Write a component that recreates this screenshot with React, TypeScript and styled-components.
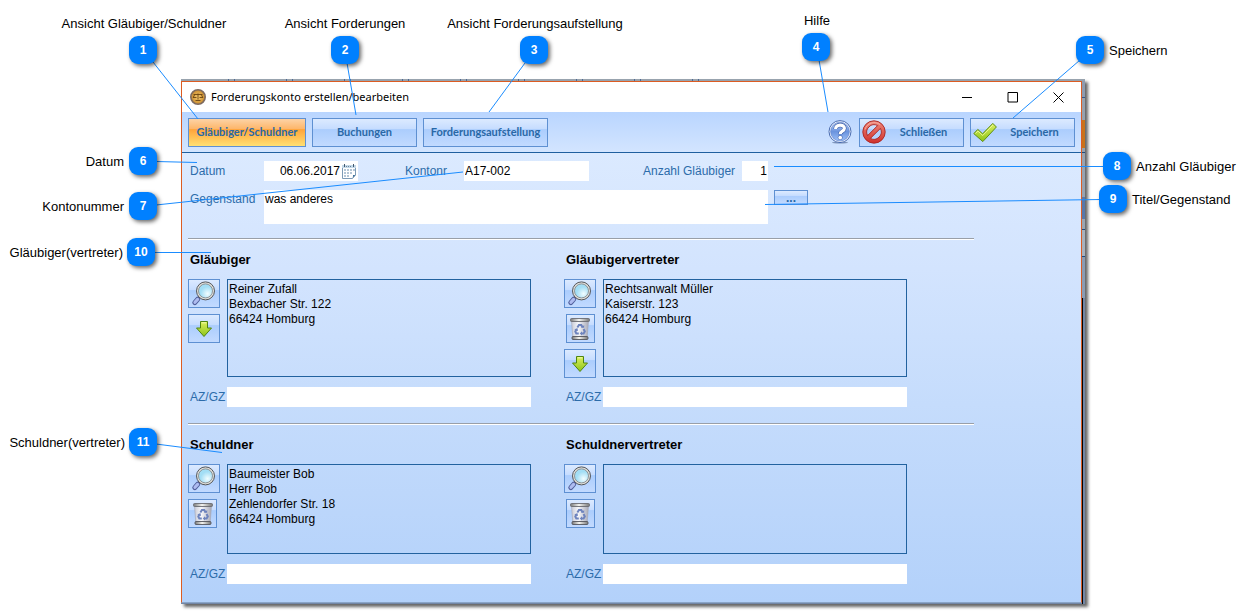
import React from "react";
import styled, { createGlobalStyle, css } from "styled-components";

const GlobalStyle = createGlobalStyle`
  *, *::before, *::after { box-sizing: border-box; }
  body { margin: 0; background: #fff; }
  button, input, textarea { font: inherit; color: inherit; margin: 0; }
`;

const sans = `"Liberation Sans", Arial, sans-serif`;

const Page = styled.div`
  position: relative;
  min-width: 1251px;
  padding: 79px 166px 8px 181px;
  font: 12px/16px ${sans};
  color: #000;
  overflow: hidden;
`;

/* Sliver of the application that shows behind the dialog */
const Backdrop = styled.div`
  padding: 2px 3px 1px 0;
  box-shadow: 3px 3px 3px rgba(0, 0, 0, 0.6);
  background:
    repeating-linear-gradient(90deg, transparent 0 47px, #4c6a95 47px 48px, transparent 48px 53px, #4c6a95 53px 54px, transparent 54px 58px) 0 0 / 560px 2px no-repeat,
    linear-gradient(#98a3ae, #98a3ae) 0 0 / 100% 2px no-repeat,
    linear-gradient(#000, #000) calc(100% - 2px) 219px / 1px 100% no-repeat,
    linear-gradient(
      #8d9bb0 0 18px, #35568a 18px 19px, #96a1ae 19px 41px, #c9731c 41px 69px,
      #96a1ae 69px 73px, #1f4c80 73px 74px, #97a2b0 74px 118px, #5878aa 118px 140px,
      #9aa5b2 140px 150px, #1f4c80 150px 151px, #a7b1bd 151px 177px, #1f4c80 177px 178px,
      #8a9bb3 178px 219px, #7286a6 219px
    );
`;

const Dialog = styled.main`
  border: 1px solid #dc5c22;
  border-bottom-color: #8aa5c8;
  background: linear-gradient(#e0edff, #d3e4fe 36%, #c5dcfc 62%, #b3d1fa);
`;

const TitleBar = styled.header`
  display: flex;
  align-items: center;
  height: 30px;
  padding-left: 8px;
  background: #fff;
  font: 11px/16px "Noto Sans", "Segoe UI", sans-serif;
`;

const Title = styled.h1`
  flex: 1;
  margin: 0 0 0 5px;
  font: inherit;
`;

const CaptionButton = styled.button`
  display: grid;
  place-items: center;
  width: 46px;
  height: 30px;
  padding: 0;
  border: 0;
  background: none;
`;

const Toolbar = styled.nav`
  display: flex;
  align-items: center;
  gap: 6px;
  height: 41px;
  padding: 0 6px;
  border-bottom: 1px solid #1f5f9f;
  background: linear-gradient(#b9d5ff, #d3e5ff);
`;

const Spacer = styled.span`
  flex: 1;
`;

const face = css`
  border: 1px solid #5e90d2;
  background: linear-gradient(#dceaff, #c5dcff 38%, #abcdfd 39%, #c2daff);
  color: #2968a6;
`;

const ToolButton = styled.button<{ $width: number; $active?: boolean }>`
  ${face}
  display: flex;
  align-items: center;
  width: ${(p) => p.$width}px;
  height: 29px;
  padding: 0 2px;
  font: bold 11px/16px Lato, Calibri, sans-serif;
  white-space: nowrap;
  ${(p) =>
    p.$active &&
    css`
      background: linear-gradient(#fdd3a6, #fdb568 38%, #ffa43a 39%, #ffe073);
    `}
`;

const ToolLabel = styled.span`
  flex: 1;
  text-align: center;
`;

const HelpButton = styled.button`
  width: 25px;
  height: 25px;
  padding: 0;
  border: 0;
  background: none;
  text-align: left;
`;

const Form = styled.form`
  width: 798px;
  padding: 8px 6px 18px;
`;

const FieldRow = styled.div`
  display: flex;
  align-items: center;
  height: 20px;
`;

const Label = styled.label<{ $width: number; $gap?: number }>`
  width: ${(p) => p.$width}px;
  margin-left: ${(p) => p.$gap ?? 0}px;
  padding-left: 2px;
  color: #2c6caa;
  white-space: nowrap;
`;

const TextInput = styled.input<{ $width?: number; $end?: boolean }>`
  ${(p) => (p.$width ? `width: ${p.$width}px;` : "flex: 1; min-width: 0;")}
  height: 20px;
  padding: 0 1px;
  border: 0;
  background: #fff;
  text-align: ${(p) => (p.$end ? "right" : "left")};
`;

const DateField = styled.span`
  display: flex;
  align-items: center;
  width: 94px;
  background: #fff;
`;

const PickerButton = styled.button`
  width: 16px;
  height: 16px;
  margin-right: 1px;
  padding: 0;
  border: 0;
  background: none;
`;

const SubjectRow = styled.div`
  display: flex;
  align-items: flex-start;
  margin-top: 9px;
  line-height: 18px;
`;

const Subject = styled.textarea`
  width: 504px;
  height: 34px;
  padding: 0 1px;
  border: 0;
  background: #fff;
  resize: none;
`;

const MoreButton = styled.button`
  ${face}
  width: 34px;
  height: 15px;
  margin-left: 6px;
  padding: 0;
  font-weight: bold;
  line-height: 12px;
`;

const Parties = styled.section`
  display: grid;
  grid-template-columns: 343px 343px;
  column-gap: 33px;
  margin-top: 14px;
  border-top: 1px solid #999fa8;
  box-shadow: inset 0 1px #fff;

  & + & {
    margin-top: 16px;
  }
`;

const Party = styled.div`
  padding-top: 13px;
`;

const PartyTitle = styled.h2`
  margin: 0 0 11px;
  padding-left: 2px;
  font: bold 13px/16px ${sans};
`;

const PartyBody = styled.div<{ $height: number }>`
  display: grid;
  grid-template: 100% / 32px 304px;
  column-gap: 7px;
  height: ${(p) => p.$height}px;
`;

const IconColumn = styled.div<{ $center?: boolean }>`
  display: flex;
  flex-direction: column;
  align-items: ${(p) => (p.$center ? "center" : "flex-start")};
  gap: 6px;
`;

const IconButton = styled.button<{ $width?: number }>`
  ${face}
  display: grid;
  place-items: center;
  flex: none;
  width: ${(p) => p.$width ?? 32}px;
  height: 29px;
  padding: 0;
`;

const Address = styled.textarea`
  height: 100%;
  padding: 2px 1px;
  border: 1px solid #22629f;
  background: none;
  line-height: 15px;
  resize: none;
`;

const ReferenceRow = styled.div`
  display: flex;
  align-items: center;
  height: 20px;
  margin-top: 10px;
`;

/* ---------- callouts ---------- */

const CalloutLayer = styled.div<{ $side: "left" | "right" }>`
  position: absolute;
  top: 0;
  ${(p) => p.$side}: 0;
  width: ${(p) => (p.$side === "left" ? 700 : 500)}px;
  height: 611px;
  pointer-events: none;
`;

const Leaders = styled.svg`
  position: absolute;
  inset: 0;
  width: 100%;
  height: 100%;
  stroke: #1a8cff;
`;

const Pin = styled.span<{ $x: number; $y: number }>`
  position: absolute;
  left: ${(p) => p.$x}px;
  top: ${(p) => p.$y}px;
  display: grid;
  place-items: center;
  width: 28px;
  height: 28px;
  border-radius: 9px;
  background: #0080ff;
  box-shadow: 2px 2px 4px rgba(0, 0, 0, 0.6);
  color: #fff;
  font: bold 12px/16px ${sans};
`;

const PinText = styled.span<{ $x: number; $y: number; $align: "center" | "start" | "end" }>`
  position: absolute;
  left: ${(p) => p.$x - (p.$align === "center" ? 100 : p.$align === "end" ? 200 : 0)}px;
  top: ${(p) => p.$y}px;
  width: 200px;
  text-align: ${(p) => p.$align};
  font: 13px/16px ${sans};
  white-space: nowrap;
`;

type Callout = {
  n: number;
  text: string;
  pin: [number, number];
  label: [number, number];
  align: "center" | "start" | "end";
  line: [number, number, number, number];
};

const leftCallouts: Callout[] = [
  { n: 1, text: "Ansicht Gläubiger/Schuldner", pin: [129, 36], label: [144, 16], align: "center", line: [153, 62, 198, 119] },
  { n: 2, text: "Ansicht Forderungen", pin: [331, 36], label: [345, 16], align: "center", line: [347, 63, 356, 115] },
  { n: 3, text: "Ansicht Forderungsaufstellung", pin: [520, 36], label: [535, 16], align: "center", line: [525, 63, 489, 112] },
  { n: 6, text: "Datum", pin: [129, 147], label: [124, 154], align: "end", line: [156, 161.5, 197, 162.5] },
  { n: 7, text: "Kontonummer", pin: [129, 192], label: [124, 199], align: "end", line: [156, 205, 463, 172] },
  { n: 10, text: "Gläubiger(vertreter)", pin: [127, 238], label: [123, 245], align: "end", line: [154, 252.5, 211, 252.5] },
  { n: 11, text: "Schuldner(vertreter)", pin: [129, 428], label: [125, 435], align: "end", line: [156, 444, 222, 452.5] },
];

const rightCallouts: Callout[] = [
  { n: 4, text: "Hilfe", pin: [51, 33], label: [66, 13], align: "center", line: [68, 60, 77, 112] },
  { n: 5, text: "Speichern", pin: [325, 36], label: [358, 43], align: "start", line: [329, 60, 262, 118] },
  { n: 8, text: "Anzahl Gläubiger", pin: [352, 152], label: [385, 159], align: "start", line: [23, 166.5, 354, 166.5] },
  { n: 9, text: "Titel/Gegenstand", pin: [348, 185], label: [381, 192], align: "start", line: [14, 204.5, 350, 199.5] },
];

function Callouts({ side, items }: { side: "left" | "right"; items: Callout[] }) {
  return (
    <CalloutLayer $side={side}>
      <Leaders aria-hidden="true">
        {items.map(({ n, line: [x1, y1, x2, y2] }) => (
          <line key={n} x1={x1} y1={y1} x2={x2} y2={y2} />
        ))}
      </Leaders>
      {items.map((c) => (
        <React.Fragment key={c.n}>
          <PinText $x={c.label[0]} $y={c.label[1]} $align={c.align}>{c.text}</PinText>
          <Pin $x={c.pin[0]} $y={c.pin[1]}>{c.n}</Pin>
        </React.Fragment>
      ))}
    </CalloutLayer>
  );
}

/* ---------- icons ---------- */

const GradientSheet = styled.svg`
  position: absolute;
  width: 0;
  height: 0;
`;

const Gradients = () => (
  <GradientSheet aria-hidden="true">
    <defs>
      <radialGradient id="gold"><stop offset="0" stopColor="#f5cb72" /><stop offset="1" stopColor="#c98a2b" /></radialGradient>
      <linearGradient id="blue" x2="0" y2="1"><stop stopColor="#b9cff5" /><stop offset=".5" stopColor="#6a93de" /><stop offset="1" stopColor="#9dc0f8" /></linearGradient>
      <linearGradient id="red" x2="0" y2="1"><stop stopColor="#f08a7c" /><stop offset="1" stopColor="#cf2f2b" /></linearGradient>
      <linearGradient id="green" x2="0" y2="1"><stop stopColor="#dcf060" /><stop offset="1" stopColor="#8cc418" /></linearGradient>
      <radialGradient id="lens" cx=".65" cy=".7"><stop stopColor="#f2fdff" /><stop offset="1" stopColor="#a3def5" /></radialGradient>
      <linearGradient id="can"><stop stopColor="#c9cbd6" /><stop offset=".4" stopColor="#f6f7fb" /><stop offset="1" stopColor="#a9abb8" /></linearGradient>
      <linearGradient id="rim"><stop stopColor="#777" /><stop offset=".45" stopColor="#f4f4f0" /><stop offset="1" stopColor="#777" /></linearGradient>
    </defs>
  </GradientSheet>
);

const ScalesIcon = () => (
  <svg width="16" height="16" viewBox="0 0 16 16" aria-hidden="true">
    <circle cx="8" cy="8" r="7.2" fill="url(#gold)" stroke="#7d6a60" strokeWidth="1.6" />
    <path d="M3.500 5.500h9M8 4.500v6M5.500 11.500h5M3 8.500h3.500M9.500 8.500H13M4.700 5.500L3.200 8.500M11.300 5.500l1.500 3" fill="none" stroke="#6b4410" strokeWidth=".9" />
  </svg>
);

const HelpIcon = () => (
  <svg width="24" height="24" viewBox="0 0 24 24" aria-hidden="true">
    <ellipse cx="12" cy="22.6" rx="8" ry="1" fill="#7d93b8" />
    <circle cx="12" cy="11.6" r="11" fill="#edf3ff" stroke="#4a6cb0" />
    <circle cx="12" cy="11.6" r="9.4" fill="url(#blue)" stroke="#5b7ec6" strokeWidth=".6" />
    <path d="M7.600 9C7.600 3.800 16.400 3.900 16.400 8.300c0 3-4.200 2.800-4.200 6" fill="none" stroke="#3b5da6" strokeWidth="4.400" />
    <circle cx="12.2" cy="17.600" r="2.400" fill="#3b5da6" />
    <path d="M7.600 9C7.600 3.800 16.400 3.900 16.400 8.300c0 3-4.200 2.800-4.200 5.700" fill="none" stroke="#fff" strokeWidth="3.200" />
    <circle cx="12.2" cy="17.600" r="1.900" fill="#fff" />
  </svg>
);

const ForbidIcon = () => (
  <svg width="24" height="24" viewBox="0 0 24 24" aria-hidden="true">
    <path fillRule="evenodd" d="M12 .8a11.2 11.2 0 1 1 0 22.4A11.2 11.2 0 0 1 12 .8zM5.6 15.6L15.6 5.6A7.4 7.4 0 0 0 5.6 15.6zM8.400 18.400A7.400 7.400 0 0 0 18.400 8.400z" fill="url(#red)" stroke="#a92623" strokeWidth=".9" />
    <path d="M3 9.500A9.500 9.500 0 0 1 18 4.600" fill="none" stroke="#f7b5aa" strokeWidth=".8" />
  </svg>
);

const CheckIcon = () => (
  <svg width="24" height="24" viewBox="0 0 24 24" aria-hidden="true">
    <path d="M.8 13.600l4-4.200 4.800 4.400L19.800 3.400l3.600 3.600L9.800 21.600z" fill="url(#green)" stroke="#5f8f14" />
    <path d="M2.500 13.500l2.400-2.500 4.800 4.500L19.800 5.200" fill="none" stroke="#f0fa9c" strokeWidth=".9" />
  </svg>
);

const CalendarIcon = () => (
  <svg width="16" height="16" viewBox="0 0 16 16" aria-hidden="true">
    <path d="M1.500 2.500h13v9.500l-3 3.500H1.500z" fill="#fff" stroke="#7d9bb6" />
    <path d="M1 2h14v3H1z" fill="#c3d8e8" />
    <path d="M3.500 1v3M12.500 1v3" stroke="#43586c" />
    <path d="M5 3.500h6" stroke="#6b8399" strokeDasharray="1 1" />
    <path d="M3 6h2v2H3zM6 6h2v2H6zM9 6h2v2H9zM12 6h2v2h-2zM3 9h2v2H3zM6 9h2v2H6zM9 9h2v2H9zM3 12h2v2H3zM6 12h2v2H6z" fill="#b4c6d6" />
    <path d="M15 11.500c-1 .8-2 .5-3 .5 0 1.500 0 2.500-1 3.500z" fill="#3f6f99" />
  </svg>
);

const SearchIcon = () => (
  <svg width="26" height="26" viewBox="0 0 26 26" aria-hidden="true">
    <path d="M9 15.500L6 19" stroke="#8f9298" strokeWidth="2.400" />
    <path d="M6.800 18.200L3.800 21.600" stroke="#52609c" strokeWidth="5" strokeLinecap="round" />
    <path d="M6.600 18.400L4 21.300" stroke="#aebcf0" strokeWidth="3.200" strokeLinecap="round" />
    <circle cx="14.500" cy="9.900" r="9" fill="#e0e0dc" stroke="#55575a" />
    <circle cx="14.500" cy="9.900" r="7" fill="url(#lens)" stroke="#7c8084" strokeWidth=".8" />
  </svg>
);

const DownIcon = () => (
  <svg width="18" height="18" viewBox="0 0 18 18" aria-hidden="true">
    <path d="M5.500 1.500h7v6.500h4L9 16.500 1.500 8h4z" fill="url(#green)" stroke="#4f8512" strokeLinejoin="round" />
    <path d="M6.800 2.800h4.400" stroke="#f1fbb0" />
  </svg>
);

const TrashIcon = () => (
  <svg width="22" height="24" viewBox="0 0 22 24" aria-hidden="true">
    <path d="M2.500 4h17l-1.300 16H3.800z" fill="url(#can)" stroke="#a2a4b4" strokeWidth=".6" />
    <rect x="1.500" y="1.500" width="19" height="3" rx="1" fill="url(#rim)" stroke="#6a6b70" strokeWidth=".9" />
    <rect x="3" y="19.500" width="16" height="3" rx="1" fill="url(#rim)" stroke="#55565c" strokeWidth=".9" />
    <g fill="none" stroke="#6d83bd" strokeWidth="2">
      <path d="M8.400 10.600l1.500-2.500h2.400l1.300 2.100" />
      <path d="M14.600 12l1.200 2.500-1.200 2h-2.200" />
      <path d="M9.800 16.500H7.300l-1-2 1.200-2.200" />
    </g>
    <path d="M12 10.800h3.200V7.900zM13 14.300v4.200l-2.200-2.100zM5.300 12.800l3-1.700.8 3z" fill="#6d83bd" />
  </svg>
);

/* ---------- dialog content ---------- */

type Action = "search" | "trash" | "down";
const actionIcon = { search: <SearchIcon />, trash: <TrashIcon />, down: <DownIcon /> };
const actionName = { search: "Suchen", trash: "Entfernen", down: "Übernehmen" };

function PartyPanel(props: { id: string; title: string; lines: string[]; actions: Action[]; height: number; center?: boolean }) {
  const { id, title, lines, actions, height, center } = props;
  return (
    <Party>
      <PartyTitle id={`${id}-title`}>{title}</PartyTitle>
      <PartyBody $height={height}>
        <IconColumn $center={center}>
          {actions.map((a) => (
            <IconButton key={a} type="button" aria-label={actionName[a]} $width={a === "trash" ? 29 : 32}>
              {actionIcon[a]}
            </IconButton>
          ))}
        </IconColumn>
        <Address aria-labelledby={`${id}-title`} readOnly value={lines.join("\n")} />
      </PartyBody>
      <ReferenceRow>
        <Label htmlFor={`${id}-ref`} $width={39}>AZ/GZ</Label>
        <TextInput id={`${id}-ref`} />
      </ReferenceRow>
    </Party>
  );
}

export default function App() {
  return (
    <Page>
      <GlobalStyle />
      <Gradients />
      <Backdrop>
        <Dialog>
          <TitleBar>
            <ScalesIcon />
            <Title>Forderungskonto erstellen/bearbeiten</Title>
            <CaptionButton aria-label="Minimieren">
              <svg width="11" height="11" stroke="#000"><path d="M1 5.500h10" /></svg>
            </CaptionButton>
            <CaptionButton aria-label="Maximieren">
              <svg width="11" height="11" stroke="#000" fill="none"><path d="M1 .5h9.500v9.500h-9.500z" /></svg>
            </CaptionButton>
            <CaptionButton aria-label="Fenster schließen">
              <svg width="11" height="11" stroke="#000"><path d="M.5.5l10 10M10.500.5l-10 10" /></svg>
            </CaptionButton>
          </TitleBar>
          <Toolbar>
            <ToolButton $width={118} $active><ToolLabel>Gläubiger/Schuldner</ToolLabel></ToolButton>
            <ToolButton $width={105}><ToolLabel>Buchungen</ToolLabel></ToolButton>
            <ToolButton $width={125}><ToolLabel>Forderungsaufstellung</ToolLabel></ToolButton>
            <Spacer />
            <HelpButton aria-label="Hilfe"><HelpIcon /></HelpButton>
            <ToolButton $width={105}><ForbidIcon /><ToolLabel>Schließen</ToolLabel></ToolButton>
            <ToolButton $width={105}><CheckIcon /><ToolLabel>Speichern</ToolLabel></ToolButton>
          </Toolbar>
          <Form>
            <FieldRow>
              <Label htmlFor="date" $width={76}>Datum</Label>
              <DateField>
                <TextInput id="date" defaultValue="06.06.2017" $end />
                <PickerButton type="button" aria-label="Kalender"><CalendarIcon /></PickerButton>
              </DateField>
              <Label htmlFor="account" $width={61} $gap={45}>Kontonr</Label>
              <TextInput id="account" defaultValue="A17-002" $width={125} />
              <Label htmlFor="count" $width={101} $gap={52}>Anzahl Gläubiger</Label>
              <TextInput id="count" defaultValue="1" $width={26} $end />
            </FieldRow>
            <SubjectRow>
              <Label htmlFor="subject" $width={76}>Gegenstand</Label>
              <Subject id="subject" defaultValue="was anderes" />
              <MoreButton type="button">...</MoreButton>
            </SubjectRow>
            <Parties>
              <PartyPanel id="creditor" title="Gläubiger" height={98} actions={["search", "down"]}
                lines={["Reiner Zufall", "Bexbacher Str. 122", "66424 Homburg"]} />
              <PartyPanel id="creditor-agent" title="Gläubigervertreter" height={98} actions={["search", "trash", "down"]} center
                lines={["Rechtsanwalt Müller", "Kaiserstr. 123", "66424 Homburg"]} />
            </Parties>
            <Parties>
              <PartyPanel id="debtor" title="Schuldner" height={90} actions={["search", "trash"]}
                lines={["Baumeister Bob", "Herr Bob", "Zehlendorfer Str. 18", "66424 Homburg"]} />
              <PartyPanel id="debtor-agent" title="Schuldnervertreter" height={90} actions={["search", "trash"]} center lines={[]} />
            </Parties>
          </Form>
        </Dialog>
      </Backdrop>
      <Callouts side="left" items={leftCallouts} />
      <Callouts side="right" items={rightCallouts} />
    </Page>
  );
}
